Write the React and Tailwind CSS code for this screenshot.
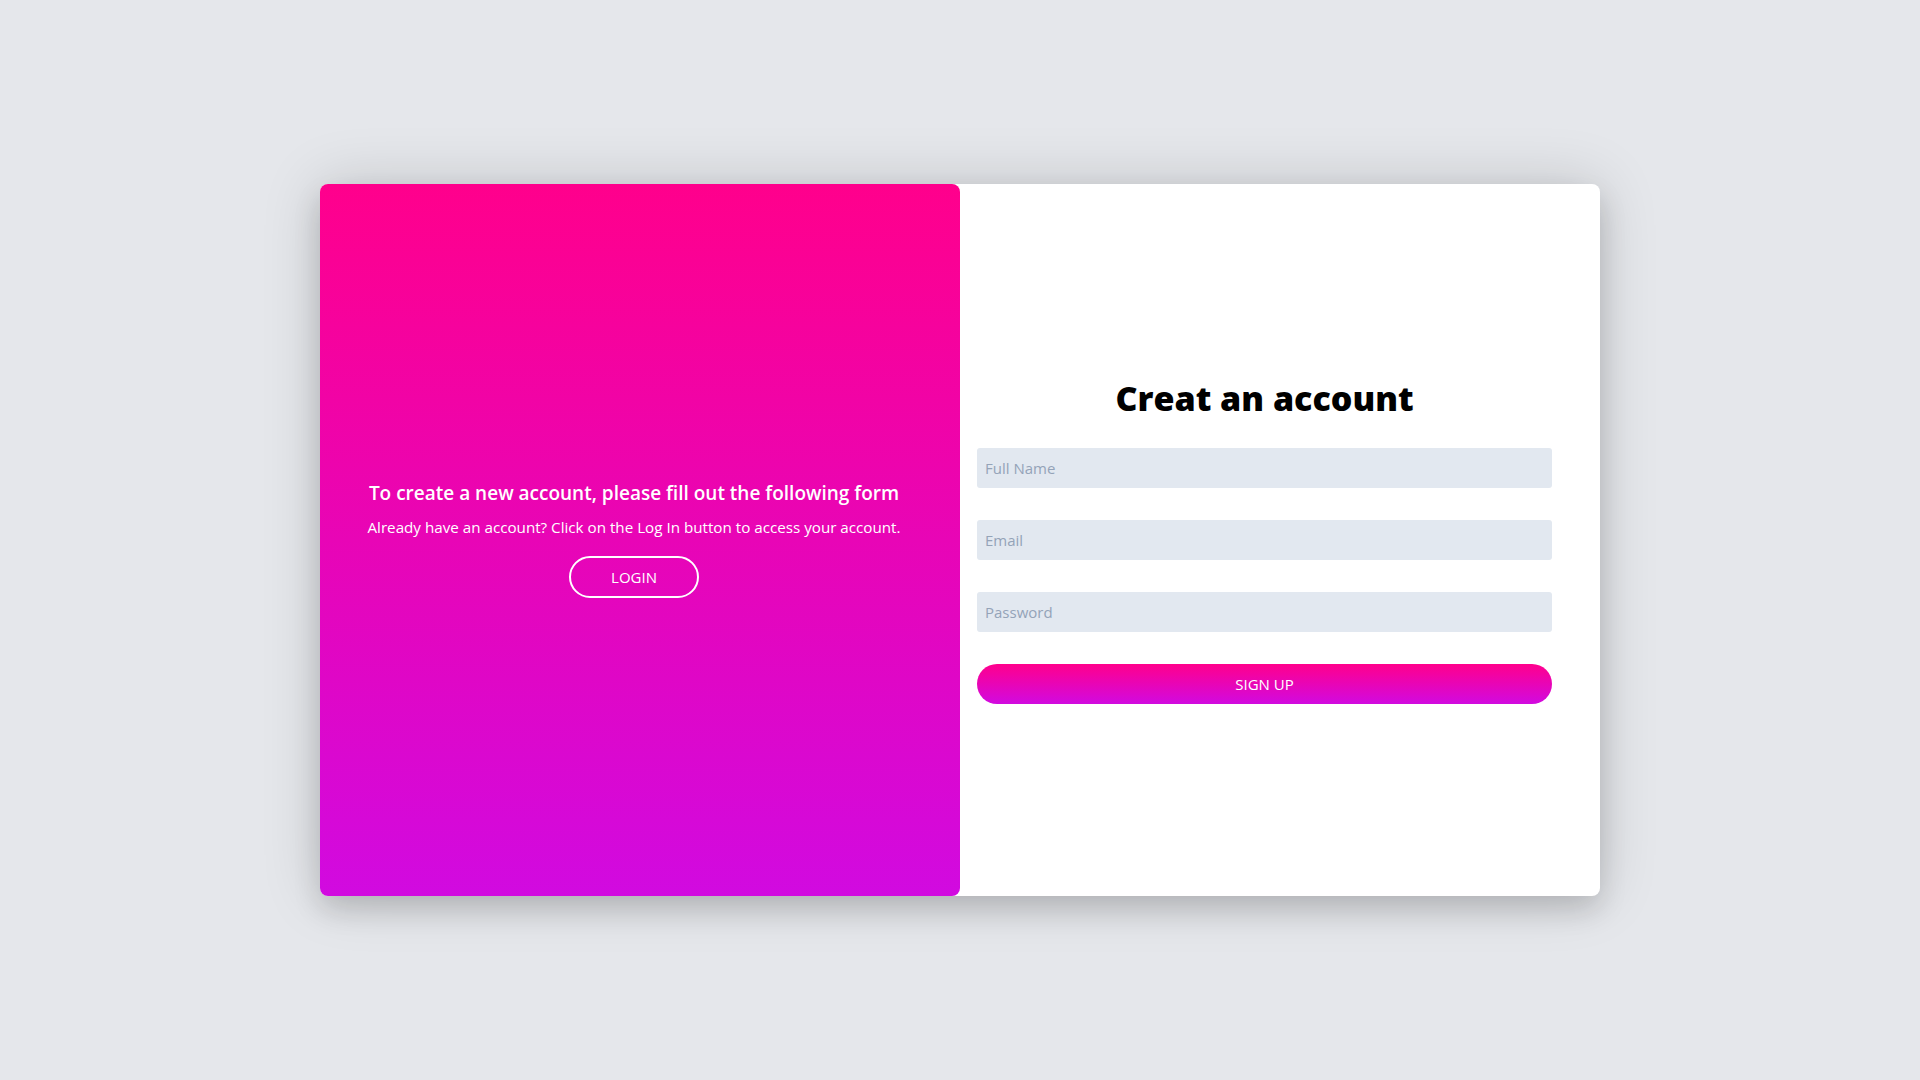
export default function App() {
  return (
    <div
      className="min-h-screen w-full bg-[#e5e7eb] flex items-center justify-center"
      style={{ fontFamily: '"Open Sans", "Noto Sans", sans-serif' }}
    >
      <div className="w-[1280px] h-[66vh] bg-white rounded-lg flex shadow-[0_0_60px_rgba(0,0,0,0.16),0_14px_28px_rgba(0,0,0,0.14)]">
        {/* Overlay panel */}
        <div className="w-1/2 h-full rounded-lg bg-[linear-gradient(to_bottom,#ff008c,#d10ae0)] flex flex-col items-center justify-center text-center text-white pl-[28px] pr-[40px]">
          <h2 className="text-[19px] font-semibold leading-[24px] whitespace-nowrap">
            To create a new account, please fill out the following form
          </h2>
          <p className="text-[15.2px] leading-[23px] mt-[11px]">
            Already have an account? Click on the Log In button to access your account.
          </p>
          <button className="mt-[17px] w-[130px] h-[42px] rounded-full border-2 border-white text-[15px] text-white">
            LOGIN
          </button>
        </div>

        {/* Form */}
        <div className="w-1/2 h-full flex flex-col justify-center pl-[17px] pr-[48px] pt-[2px]">
          <h1 className="text-[34px] font-extrabold text-black text-center leading-[41px] mb-[29px]">
            Creat an account
          </h1>
          <form className="flex flex-col gap-[32px]" onSubmit={(e) => e.preventDefault()}>
            <input
              type="text"
              placeholder="Full Name"
              className="h-[40px] w-full rounded-[3px] bg-[#e2e8f0] px-[8px] text-[15px] outline-none placeholder:text-[#94a3b8]"
            />
            <input
              type="email"
              placeholder="Email"
              className="h-[40px] w-full rounded-[3px] bg-[#e2e8f0] px-[8px] text-[15px] outline-none placeholder:text-[#94a3b8]"
            />
            <input
              type="password"
              placeholder="Password"
              className="h-[40px] w-full rounded-[3px] bg-[#e2e8f0] px-[8px] text-[15px] outline-none placeholder:text-[#94a3b8]"
            />
            <button className="h-[40px] w-full rounded-full bg-[linear-gradient(to_bottom,#ff008c,#d10ae0)] text-white text-[15px]">
              SIGN UP
            </button>
          </form>
        </div>
      </div>
    </div>
  );
}
